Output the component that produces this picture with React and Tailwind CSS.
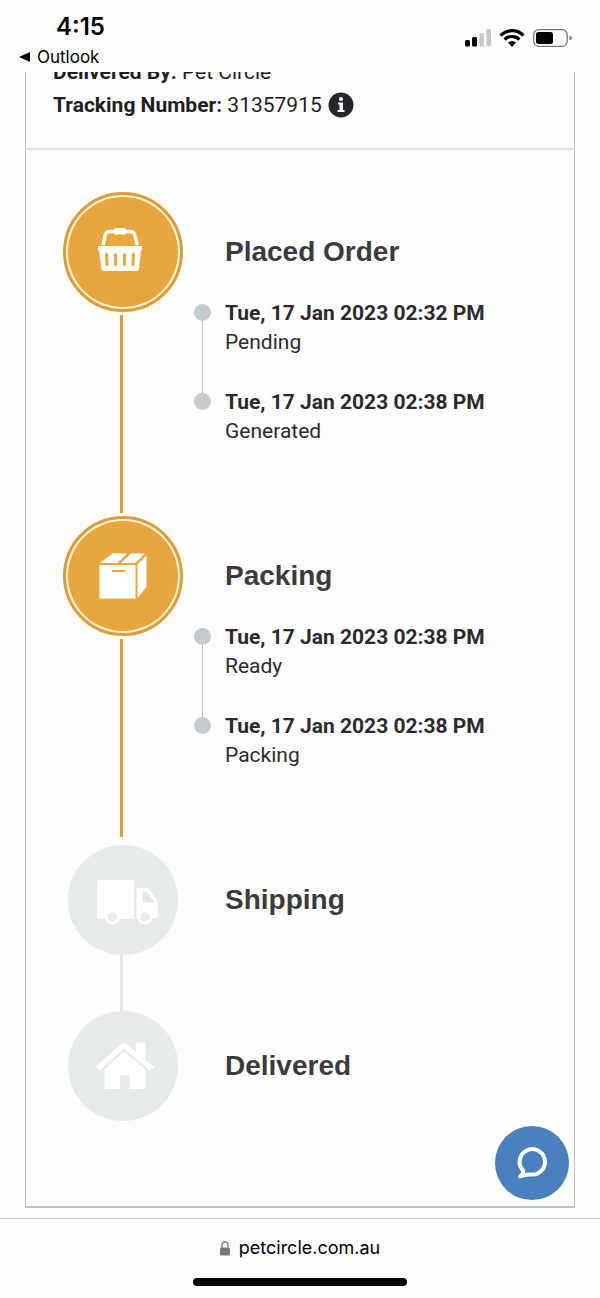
import React from 'react';

const stages = [
    {
        title: 'Placed Order',
        icon: 'basket',
        done: true,
        events: [
            { time: 'Tue, 17 Jan 2023 02:32 PM', status: 'Pending' },
            { time: 'Tue, 17 Jan 2023 02:38 PM', status: 'Generated' },
        ],
    },
    {
        title: 'Packing',
        icon: 'box',
        done: true,
        events: [
            { time: 'Tue, 17 Jan 2023 02:38 PM', status: 'Ready' },
            { time: 'Tue, 17 Jan 2023 02:38 PM', status: 'Packing' },
        ],
    },
    { title: 'Shipping', icon: 'truck', done: false, events: [] },
    { title: 'Delivered', icon: 'house', done: false, events: [] },
];

// every stage icon is drawn on the same 120 x 120 circle
const StageIcon = ({ name }) => (
    <svg viewBox="0 0 120 120" className="w-[120px] h-[120px] shrink-0" aria-hidden="true">
        {name === 'basket' && (
            <>
                <path d="M40 53 L42 44 Q43 39.500 47 39.500 H67 Q71 39.500 72 44 L74.500 53" fill="none" stroke="#fff" strokeWidth="3.500" />
                <rect x="51" y="36" width="12" height="6.500" rx="1.500" fill="#fff" />
                <path d="M35 54 H79 V58.500 H78 L76 77 Q75.500 79 73.500 79 H41 Q39 79 38.500 77 L36 58.500 H35 Z" fill="#fff" />
                <path d="M43.500 62.500 L44 72.500 M52.500 62.500 V72.500 M61.500 62.500 V72.500 M70.500 62.500 L70 72.500" stroke="#e8a63e" strokeWidth="3" strokeLinecap="round" />
            </>
        )}
        {name === 'box' && (
            <g fill="#fff">
                <rect x="36.500" y="49" width="36" height="33.500" />
                <path d="M37 47 L49.500 37.500 H64 L54.500 47 Z" />
                <path d="M58 47 L68 37.500 H82 L72.500 47 Z" />
                <path d="M74.500 48.500 L83.500 39.500 V71 L74.500 82 Z" />
                <rect x="49" y="54" width="13" height="2" fill="#e8a63e" />
            </g>
        )}
        {name === 'truck' && (
            <>
                <rect x="34" y="40" width="37" height="39" rx="2.500" fill="#fff" />
                <path d="M73.500 48 H83 Q85 48 86.500 50 L93 58.500 Q94.500 60 94.500 62 V75 Q94.500 78.500 91 78.500 H73.500 Z" fill="#fff" />
                <path d="M79.500 51.500 H83.500 L91.500 61.500 V62.500 H79.500 Z" fill="#e6eaeb" />
                <circle cx="49.500" cy="77" r="6" fill="#e6eaeb" stroke="#fff" strokeWidth="2.500" />
                <circle cx="82" cy="77" r="6" fill="#e6eaeb" stroke="#fff" strokeWidth="2.500" />
            </>
        )}
        {name === 'house' && (
            <g fill="#fff">
                <path d="M33 60.500 L59 37.500 Q61 36 63 37.500 L73 46 V37.500 Q73 36.500 74 36.500 H81.500 Q82.500 36.500 82.500 37.500 V54 L91.500 61 L87 64.500 L61 42.500 L36.500 64.500 Z" />
                <path d="M41.500 63 L61 45.500 L82.500 63.500 V81.500 Q82.500 83 81 83 H66.500 V69.500 H57 V83 H43 Q41.500 83 41.500 81.500 Z" />
            </g>
        )}
    </svg>
);

const StageBadge = ({ stage }) => {
    if (stage.done) {
        return (
            <div className="w-[120px] h-[120px] shrink-0 rounded-full border-[3px] border-[#dd9c3a] bg-[#fff3d6] p-[2px]">
                <div className="w-full h-full rounded-full bg-[#e8a63e] flex items-center justify-center">
                    <StageIcon name={stage.icon} />
                </div>
            </div>
        );
    }
    return (
        <div className="w-[120px] h-[120px] shrink-0 p-[5px]">
            <div className="w-full h-full rounded-full bg-[#e6eaeb] flex items-center justify-center">
                <StageIcon name={stage.icon} />
            </div>
        </div>
    );
};

const Events = ({ events }) => (
    <ul className="pl-[11px]">
        {events.map((event, index) => (
            <li key={index} className="flex gap-[14px] h-[89px]">
                <div className="flex flex-col items-center pt-[5px] w-[17px]">
                    <span className="w-[17px] h-[17px] shrink-0 rounded-full bg-[#c3cbcd]"></span>
                    {index < events.length - 1 && <span className="w-px flex-1 -mb-[5px] bg-[#b4bfc2]"></span>}
                </div>
                <div className="text-[21px] leading-[29px] text-[#2b2b2d]">
                    <p className="font-bold whitespace-nowrap">{event.time}</p>
                    <p>{event.status}</p>
                </div>
            </li>
        ))}
    </ul>
);

const Stage = ({ stage, last }) => (
    <li className={stage.done ? 'flex min-h-[324px]' : last ? 'flex' : 'flex min-h-[166px]'}>
        <div className="flex flex-col items-center w-[120px] shrink-0">
            <StageBadge stage={stage} />
            {!last && (
                <span className={stage.done
                    ? 'w-[3px] mr-[3px] flex-1 my-[3px] bg-[#dd9c3a]'
                    : 'w-[3px] mr-[3px] flex-1 -my-[5px] bg-[#e1e5e6]'}></span>
            )}
        </div>
        <div>
            <h2 className="pl-[42px] pt-[13px] h-[107px] flex items-center font-['Liberation_Sans',sans-serif] font-bold text-[28px] text-[#3b3b3d]">
                {stage.title}
            </h2>
            <Events events={stage.events} />
        </div>
    </li>
);

const StatusBar = () => (
    <header className="h-[72px] flex justify-between font-['Inter',sans-serif] text-black">
        <div className="pt-3">
            <p className="pl-14 text-[24px] leading-[30px] font-semibold">4:15</p>
            <a href="#outlook" className="pl-[19px] flex items-center gap-[6px] text-[17px] leading-[30px]">
                <svg viewBox="0 0 12 12" className="w-3 h-3" aria-hidden="true"><path d="M0 6 L11 1 V11 Z" /></svg>
                Outlook
            </a>
        </div>
        <div className="flex items-center gap-2 pt-7 pr-7 h-[47px]">
            <svg viewBox="0 0 27 18" className="w-[27px] h-[18px]" aria-hidden="true">
                <rect x="1" y="11" width="5" height="6.500" rx="1.500" />
                <rect x="8" y="8" width="5" height="9.500" rx="1.500" />
                <rect x="15.500" y="4" width="4.500" height="13.500" rx="1.500" fill="#c6c6c6" />
                <rect x="22.500" y="0" width="4.500" height="17.500" rx="1.500" fill="#c6c6c6" />
            </svg>
            <svg viewBox="0 0 26 18" className="w-[26px] h-[18px]" fill="none" stroke="#000" aria-hidden="true">
                <path d="M1.500 6.500 C8 0 18 0 24.500 6.500" strokeWidth="3.200" />
                <path d="M5.500 10.500 C9.500 6.500 16.500 6.500 20.500 10.500" strokeWidth="3.200" />
                <path d="M9 13.500 Q13 10.500 17 13.500 L13 18 Z" fill="#000" stroke="none" />
            </svg>
            <svg viewBox="0 0 39 18" className="w-[39px] h-[18px]" aria-hidden="true">
                <rect x="0.700" y="0.700" width="33.500" height="16.600" rx="5" fill="none" stroke="#777" strokeWidth="1.300" />
                <rect x="3" y="3" width="17" height="12" rx="2.500" />
                <path d="M36.500 6.500 Q39 7.500 39 9 Q39 10.500 36.500 11.500 Z" fill="#777" />
            </svg>
        </div>
    </header>
);

const App = () => {
    return (
        <div className="bg-[#fdfdfd] font-['Roboto',sans-serif]">
            <StatusBar />
            <main className="relative px-[25px] pb-[10px]">
                <div className="border-x border-b-2 border-[#b9c3c7]">
                    {/* scrolled under the status bar, so the first line is cut */}
                    <div className="h-[78px] pb-7 pl-[27px] overflow-hidden flex flex-col justify-end gap-[3px] border-b-2 border-[#dfe5e7] text-[21px] leading-[30px] text-[#1f1f21]">
                        <p><strong>Delivered By:</strong> Pet Circle</p>
                        <div className="flex items-center gap-[6px]">
                            <p><strong>Tracking Number:</strong> 31357915</p>
                            <button type="button" aria-label="Tracking info">
                                <svg viewBox="0 0 26 26" className="w-[26px] h-[26px]" aria-hidden="true">
                                    <circle cx="13" cy="13" r="12.500" fill="#26262b" />
                                    <circle cx="13" cy="7" r="2" fill="#fff" />
                                    <path d="M10 10.500 H15 V18 H16.500 V20 H9.500 V18 H11.500 V12.500 H10 Z" fill="#fff" />
                                </svg>
                            </button>
                        </div>
                    </div>
                    <ol className="pt-[42px] pl-[37px] pb-[80px]">
                        {stages.map((stage, index) => (
                            <Stage key={stage.title} stage={stage} last={index === stages.length - 1} />
                        ))}
                    </ol>
                </div>
                {/* floating chat */}
                <button type="button" aria-label="Chat" className="absolute right-[31px] bottom-[18px] w-[74px] h-[74px] rounded-full bg-[#4b80bf]">
                    <svg viewBox="0 0 74 74" className="w-full h-full" aria-hidden="true">
                        <path d="M28 44.500 A12.700 12.700 0 1 1 36 48.500 Q31 48 25 50.500 Q29 48 28 44.500 Z" fill="none" stroke="#fff" strokeWidth="4" strokeLinejoin="round" />
                    </svg>
                </button>
            </main>
            <footer className="border-t border-[#c9c9cb] h-20 flex flex-col items-center pt-[14px] font-['Inter',sans-serif]">
                <a href="#address" className="flex items-center gap-[9px] text-[18px] leading-[30px] text-black">
                    <svg viewBox="0 0 10 15" className="w-[10px] h-[15px]" aria-hidden="true">
                        <path d="M2 7 V4.500 Q2 1 5 1 Q8 1 8 4.500 V7" fill="none" stroke="#7a7a7c" strokeWidth="1.300" />
                        <rect x="0" y="6.500" width="10" height="8" rx="1.500" fill="#7a7a7c" />
                    </svg>
                    petcircle.com.au
                </a>
                <div className="mt-[15px] w-[214px] h-2 rounded-full bg-black"></div>
            </footer>
        </div>
    );
};

export default App;
